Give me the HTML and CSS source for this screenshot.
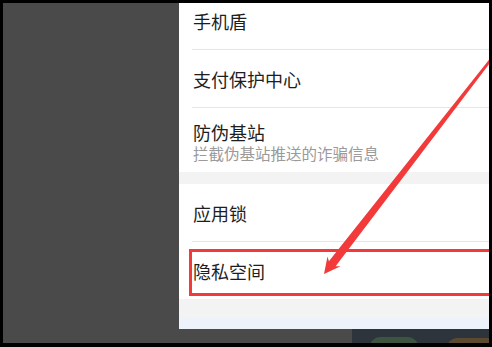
FILE: index.html
```html
<!DOCTYPE html>
<html lang="zh-CN">
<head>
<meta charset="utf-8">
<title>安全设置</title>
<link rel="stylesheet" href="styles.css">
</head>
<body>
<div class="frame">
  <div class="screen">
    <div class="shade"></div>
    <div class="panel">
      <div class="group group-first">
        <div class="row"><div class="row-inner"><span class="title">手机盾</span></div></div>
        <div class="row"><div class="row-inner"><span class="title">支付保护中心</span></div></div>
        <div class="row row-tall"><div class="row-inner">
          <span class="title">防伪基站</span>
          <span class="sub">拦截伪基站推送的诈骗信息</span>
        </div></div>
      </div>
      <div class="gap"></div>
      <div class="group">
        <div class="row"><div class="row-inner"><span class="title">应用锁</span></div></div>
        <div class="row"><div class="row-inner"><span class="title">隐私空间</span></div></div>
      </div>
      <div class="gap gap-bottom"></div>
      <div class="tabbar"></div>
    </div>
    <div class="under"></div>
    <div class="wallpaper">
      <div class="app app-green"></div>
      <div class="app app-orange"></div>
    </div>
    <div class="highlight"></div>
    <svg class="arrow" width="486" height="340" viewBox="0 0 486 340">
      <polygon fill="#f23a3a" points="321,271 337.6,263.3 332.6,263.2 492.4,52.8 490.4,51.2 325.9,258.3 324.5,253.5"/>
    </svg>
  </div>
</div>
</body>
</html>
```
FILE: styles.css
```css
* { box-sizing: border-box; }
html, body { margin: 0; padding: 0; }
body {
  background: #000;
  font-family: "Noto Sans CJK SC", "Noto Sans", sans-serif;
}
.frame {
  width: 492px;
  height: 347px;
  padding: 3px 3px 4px 3px;
  background: #000;
}
.screen {
  position: relative;
  width: 486px;
  height: 340px;
  overflow: hidden;
  background: #4a4a4a;
  display: grid;
  grid-template-columns: 176px 173px 1fr;
  grid-template-rows: 326px 14px;
}
.shade { grid-column: 1; grid-row: 1 / 3; }
.panel {
  grid-column: 2 / 4;
  grid-row: 1;
  background: #fff;
  display: flex;
  flex-direction: column;
  overflow: hidden;
}
.group-first { margin-top: -11px; }
.row {
  padding-left: 13px;
  background: #fff;
}
.row-inner {
  height: 58px;
  border-bottom: 1px solid #e6e6e6;
  display: flex;
  flex-direction: column;
  justify-content: center;
}
.row:last-child .row-inner { border-bottom: none; height: 57px; }
.row.row-tall .row-inner {
  height: 64px;
  justify-content: flex-start;
  padding-top: 13px;
}
.title {
  font-size: 18px;
  line-height: 22px;
  color: #1e1e1e;
  padding-left: 1px;
}
.sub {
  font-size: 15.5px;
  line-height: 20px;
  color: #9a9a9a;
  padding-left: 1px;
}
.gap { height: 12px; background: #f3f3f3; }
.gap-bottom { height: 19px; }
.tabbar { height: 11px; background: #eef2fa; }
.under { grid-column: 2; grid-row: 2; background: #4a4a4a; }
.wallpaper {
  grid-column: 3;
  grid-row: 2;
  background: #2e343c;
  display: flex;
  align-items: flex-start;
  padding-left: 18px;
}
.app {
  border-radius: 10px 10px 0 0;
  height: 10px;
}
.app-green { margin-top: 8px; width: 48px; background: #3d5540; }
.app-orange { margin-top: 9px; margin-left: 29px; width: 50px; background: #5b4a30; }
.highlight {
  position: absolute;
  left: 186px;
  top: 246px;
  width: 320px;
  height: 47px;
  border: 3px solid #f23a3a;
}
.arrow {
  position: absolute;
  left: 0;
  top: 0;
}
```
